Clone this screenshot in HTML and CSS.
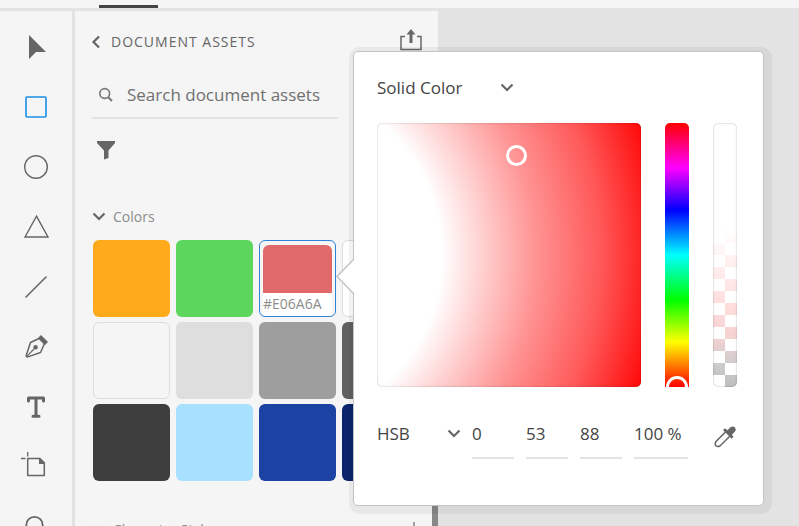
FILE: index.html
```html
<!DOCTYPE html>
<html lang="en">
<head>
    <meta charset="UTF-8">
    <meta name="viewport" content="width=device-width, initial-scale=1.0">
    <title>Document Assets</title>
    <link rel="stylesheet" href="styles.css">
</head>
<body>

    <!-- Top tabs -->
    <header class="topbar">
        <div class="tab-line"></div>
    </header>

    <div class="workspace">
        <!-- Tools -->
        <nav class="toolbar">
            <button class="tool" aria-label="Select">
                <svg width="28" height="28" viewBox="0 0 28 28"><path d="M7 2V26L14 19H24Z" fill="#666"/></svg>
            </button>
            <button class="tool active" aria-label="Rectangle">
                <svg width="28" height="28" viewBox="0 0 28 28"><rect x="4" y="4" width="20" height="20" rx="1" fill="none" stroke="#1a90e6" stroke-width="1.6"/></svg>
            </button>
            <button class="tool" aria-label="Ellipse">
                <svg width="28" height="28" viewBox="0 0 28 28"><circle cx="14" cy="14" r="11.3" fill="none" stroke="#666" stroke-width="1.4"/></svg>
            </button>
            <button class="tool" aria-label="Polygon">
                <svg width="28" height="28" viewBox="0 0 28 28"><path d="M14.5 3.2L26 24H3Z" fill="none" stroke="#666" stroke-width="1.4"/></svg>
            </button>
            <button class="tool" aria-label="Line">
                <svg width="28" height="28" viewBox="0 0 28 28"><path d="M4 24L24 4" stroke="#666" stroke-width="1.6" stroke-linecap="round"/></svg>
            </button>
            <button class="tool" aria-label="Pen">
                <svg width="28" height="28" viewBox="0 0 28 28">
                    <path d="M17.500 5.200L8.500 9.500L4.200 22.500Q4.200 24 5.800 23.900L18.500 19.500L22.500 10.500" fill="none" stroke="#666" stroke-width="1.500" stroke-linejoin="round"/>
                    <path d="M4.800 23.300L13.500 14.500" stroke="#666" stroke-width="1.200"/>
                    <circle cx="13.600" cy="14.300" r="2.200" fill="#666"/>
                    <path d="M19 2L26 9L22.800 12.200L15.800 5.200Z" fill="#666"/>
                </svg>
            </button>
            <button class="tool" aria-label="Text">
                <svg width="28" height="28" viewBox="0 0 28 28"><path d="M6.500 8V5H21.500V8M14 5V23M11 23.200H17" fill="none" stroke="#666" stroke-width="3" stroke-linecap="round" stroke-linejoin="round"/></svg>
            </button>
            <button class="tool" aria-label="Artboard">
                <svg width="28" height="28" viewBox="0 0 28 28">
                    <path d="M5.700 5.500H18L22.300 9.700V22.500H5.700Z" fill="none" stroke="#666" stroke-width="1.500" stroke-linejoin="round"/>
                    <path d="M17 5V11H23Z" fill="#666"/>
                    <path d="M5.700 -1V3.500M-1 5.500H3.500" stroke="#666" stroke-width="1.300"/>
                </svg>
            </button>
            <button class="tool" aria-label="Zoom">
                <svg width="28" height="28" viewBox="0 0 28 28"><circle cx="12.500" cy="12" r="8.200" fill="none" stroke="#666" stroke-width="1.800"/><path d="M18 18L25 25" stroke="#666" stroke-width="2.500"/></svg>
            </button>
        </nav>

        <!-- Assets panel -->
        <aside class="panel">
            <div class="panel-header">
                <button class="back" aria-label="Back">
                    <svg width="8" height="14" viewBox="0 0 8 14"><path d="M7 1.500L1.500 7L7 12.500" fill="none" stroke="#666" stroke-width="2.200"/></svg>
                </button>
                <h1>DOCUMENT ASSETS</h1>
                <button class="share" aria-label="Share">
                    <svg width="24" height="22" viewBox="0 0 24 22">
                        <path d="M6 7.500H2V20.500H22V7.500H18" fill="none" stroke="#666" stroke-width="1.500"/>
                        <path d="M12 14V3" stroke="#666" stroke-width="3"/>
                        <path d="M12 0L16.500 5.500H7.500Z" fill="#666"/>
                    </svg>
                </button>
            </div>

            <label class="search">
                <svg width="16" height="16" viewBox="0 0 16 16"><circle cx="6.700" cy="7.500" r="4.900" fill="none" stroke="#777" stroke-width="1.600"/><path d="M10 11L14 15" stroke="#777" stroke-width="2"/></svg>
                <input type="text" placeholder="Search document assets" aria-label="Search document assets">
            </label>

            <button class="filter" aria-label="Filter">
                <svg width="20" height="20" viewBox="0 0 20 20"><path d="M1 1H19V3L12.500 10.500V18L8 19.500V10.500L1 3Z" fill="#666"/></svg>
            </button>

            <section>
                <h2 class="section-title">
                    <svg width="14" height="9" viewBox="0 0 14 9"><path d="M1.500 1.500L7 7L12.500 1.500" fill="none" stroke="#666" stroke-width="2.200"/></svg>
                    Colors
                </h2>
                <div class="swatches">
                    <button class="swatch orange" aria-label="Orange"></button>
                    <button class="swatch green" aria-label="Green"></button>
                    <button class="swatch selected"><span class="fill"></span><span class="hex">#E06A6A</span></button>
                    <button class="swatch white" aria-label="White"></button>
                    <button class="swatch light" aria-label="Off white"></button>
                    <button class="swatch silver" aria-label="Light gray"></button>
                    <button class="swatch gray" aria-label="Gray"></button>
                    <button class="swatch dim" aria-label="Dim gray"></button>
                    <button class="swatch dark" aria-label="Dark gray"></button>
                    <button class="swatch sky" aria-label="Sky blue"></button>
                    <button class="swatch blue" aria-label="Blue"></button>
                    <button class="swatch navy" aria-label="Navy"></button>
                </div>
            </section>

            <section class="styles-section">
                <h2 class="section-title">
                    <svg width="14" height="9" viewBox="0 0 14 9"><path d="M1.500 1.500L7 7L12.500 1.500" fill="none" stroke="#666" stroke-width="2.200"/></svg>
                    Character Styles
                </h2>
                <button class="add" aria-label="Add character style">
                    <svg width="14" height="14" viewBox="0 0 14 14"><path d="M7 0V14M0 7H14" stroke="#999" stroke-width="1.800"/></svg>
                </button>
            </section>
            <div class="scroll-thumb"></div>
        </aside>

        <main class="canvas"></main>
    </div>

    <!-- Color picker -->
    <div class="picker">
        <svg class="picker-arrow" width="18" height="36" viewBox="0 0 18 36"><path d="M18 0L1 17.500L18 35" fill="#fff" stroke="#c4c4c4" stroke-width="1.500"/></svg>

        <div class="dropdown type">
            <select aria-label="Fill type">
                <option>Solid Color</option>
            </select>
            <svg width="14" height="9" viewBox="0 0 14 9"><path d="M1.500 1.500L7 7L12.500 1.500" fill="none" stroke="#666" stroke-width="2.200"/></svg>
        </div>

        <div class="picker-body">
            <div class="shade">
                <button class="marker" aria-label="Saturation and brightness"></button>
            </div>
            <div class="slider hue">
                <input type="range" min="0" max="360" value="0" aria-label="Hue">
            </div>
            <div class="slider alpha">
                <input type="range" min="0" max="100" value="100" aria-label="Opacity">
            </div>
        </div>

        <div class="values">
            <div class="dropdown mode">
                <select aria-label="Color mode">
                    <option>HSB</option>
                </select>
                <svg width="14" height="9" viewBox="0 0 14 9"><path d="M1.500 1.500L7 7L12.500 1.500" fill="none" stroke="#666" stroke-width="2.200"/></svg>
            </div>
            <input type="text" value="0" aria-label="Hue value">
            <input type="text" value="53" aria-label="Saturation value">
            <input type="text" value="88" aria-label="Brightness value">
            <input type="text" class="wide" value="100 %" aria-label="Opacity value">
            <button class="eyedropper" aria-label="Pick color">
                <svg width="22" height="22" viewBox="0 0 22 22">
                    <path d="M11.500 6L2 15.500Q.5 18 1.800 19.700Q3.500 21.300 6 20L15.500 10.500" fill="none" stroke="#666" stroke-width="1.500"/>
                    <path d="M9 4L11 2.200L13.300 4.200L16.500 1.200Q19 -.4 21 1.500Q22.500 3.500 20.800 5.800L17.800 8.800L19.500 10.800L17.600 12.700Z" fill="#666"/>
                </svg>
            </button>
        </div>
    </div>

</body>
</html>
```
FILE: styles.css
```css
* {
    box-sizing: border-box;
    margin: 0;
    padding: 0;
    font-family: 'Open Sans', 'Noto Sans', sans-serif;
}

body {
    height: 100vh;
    display: flex;
    flex-direction: column;
    overflow: hidden;
    background: #e3e3e3;
    color: #444;
}

button {
    border: none;
    background: none;
    cursor: pointer;
}

svg {
    display: block;
    overflow: visible;
}

/* Top bar */
.topbar {
    height: 11px;
    flex-shrink: 0;
    padding: 5px 0 0 99px;
    background: #f5f5f5;
    border-bottom: 3px solid #e3e3e3;
}

.tab-line {
    width: 59px;
    height: 3px;
    background: #444;
}

.workspace {
    flex: 1;
    min-height: 0;
    display: flex;
}

/* Tools */
.toolbar {
    width: 75px;
    flex-shrink: 0;
    display: flex;
    flex-direction: column;
    padding-top: 6px;
    background: #f5f5f5;
    border-right: 3px solid #e3e3e3;
}

.tool {
    height: 60px;
    flex-shrink: 0;
    display: flex;
    justify-content: center;
    align-items: center;
}

/* Assets panel */
.panel {
    position: relative;
    width: 363px;
    flex-shrink: 0;
    padding: 18px 15px 0 17px;
    background: #f5f5f5;
    overflow: hidden;
}

.panel-header {
    height: 26px;
    display: flex;
    align-items: center;
}

.panel-header h1 {
    flex: 1;
    margin-left: 11px;
    font-size: 14px;
    font-weight: 400;
    line-height: 18px;
    letter-spacing: 1px;
    color: #666;
}

.share {
    align-self: flex-start;
}

.search {
    width: 246px;
    height: 48px;
    margin-top: 16px;
    padding: 0 6px;
    display: flex;
    align-items: center;
    gap: 13px;
    border-bottom: 2px solid #e3e3e3;
}

.search input {
    flex: 1;
    min-width: 0;
    border: none;
    outline: none;
    background: none;
    font-size: 17px;
}

.search input::placeholder {
    color: #707070;
}

.filter {
    display: block;
    margin: 21px 0 0 4px;
}

.section-title {
    height: 20px;
    display: flex;
    align-items: center;
    gap: 7px;
    font-size: 14px;
    font-weight: 400;
    color: #8c8c8c;
}

.filter + section {
    margin-top: 46px;
}

.swatches {
    display: grid;
    grid-template-columns: repeat(4, 77px);
    grid-auto-rows: 77px;
    gap: 5px 6px;
    margin: 14px 0 0 1px;
}

.swatch {
    border-radius: 6px;
}

.orange { background: #ffaa1a; }
.green { background: #5cd65c; }
.white { background: #fff; border: 1px solid #dcdcdc; }
.light { background: #f5f5f5; border: 1px solid #dcdcdc; }
.silver { background: #dedede; }
.gray { background: #9e9e9e; }
.dim { background: #616161; }
.dark { background: #3e3e3e; }
.sky { background: #a8e1ff; }
.blue { background: #1c43a3; }
.navy { background: #0a256c; }

.selected {
    display: flex;
    flex-direction: column;
    padding: 4px 3px 0;
    border: 1px solid #2f83d6;
    background: #f5f5f5;
}

.selected .fill {
    height: 48px;
    flex-shrink: 0;
    border-radius: 6px 6px 0 0;
    background: #e06a6a;
}

.selected .hex {
    flex: 1;
    background: #fff;
    border-radius: 0 0 4px 4px;
    font-size: 14px;
    line-height: 22px;
    text-align: left;
    color: #8c8c8c;
}

.styles-section {
    display: flex;
    justify-content: space-between;
    align-items: center;
    margin-top: 38px;
    padding-right: 2px;
}

.scroll-thumb {
    position: absolute;
    right: 0;
    bottom: 0;
    width: 6px;
    height: 60px;
    background: #888;
}

.canvas {
    flex: 1;
}

/* Color picker */
.picker {
    position: absolute;
    top: 51px;
    left: 353px;
    padding: 22px 26px 45px 23px;
    background: #fff;
    border: 1px solid #c4c4c4;
    border-radius: 5px;
    box-shadow: 2px 2px 0 6px rgba(0, 0, 0, 0.05);
}

.picker-arrow {
    position: absolute;
    top: 207px;
    left: -18px;
}

.dropdown {
    position: relative;
    display: flex;
    align-items: center;
}

.dropdown select {
    width: 100%;
    height: 26px;
    appearance: none;
    border: none;
    outline: none;
    background: none;
    font-size: 17px;
    color: #444;
}

.dropdown svg {
    position: absolute;
    right: 0;
    pointer-events: none;
}

.type {
    width: 137px;
}

.mode {
    width: 84px;
}

.picker-body {
    display: flex;
    gap: 24px;
    margin-top: 23px;
}

.shade {
    position: relative;
    width: 264px;
    height: 264px;
    border-radius: 5px;
    background: radial-gradient(circle at -111px 132px, #fff 175px, #ff9494 269px, #ff5858 335px, #f00 404px);
    box-shadow: inset 0 0 2px rgba(0, 0, 0, 0.3);
}

.marker {
    position: absolute;
    top: 22px;
    left: 129px;
    width: 21px;
    height: 21px;
    border: 3px solid #fff;
    border-radius: 50%;
}

.slider {
    width: 24px;
    height: 264px;
    border-radius: 5px;
    overflow: hidden;
}

.slider input {
    display: block;
    width: 24px;
    height: 286px;
    margin-top: -11px;
    appearance: none;
    background: none;
    writing-mode: vertical-lr;
    direction: rtl;
}

.slider input::-webkit-slider-thumb {
    appearance: none;
    width: 22px;
    height: 22px;
    border: 3px solid #fff;
    border-radius: 50%;
}

.hue {
    border-radius: 5px 5px 0 0;
    background: linear-gradient(#f00, #f0f 17%, #00f 33%, #0ff 50%, #0f0 67%, #ff0 83%, #f00);
}

.alpha {
    background:
        repeating-conic-gradient(#fff 0 25%, transparent 0 50%) 0 0 / 24px 24px,
        linear-gradient(#fff 40%, #ffdede 68%, #f6d2d2 81%, #cbcbcb 92%, #bebebe);
    box-shadow: inset 0 0 2px rgba(0, 0, 0, 0.35);
}

.alpha input::-webkit-slider-thumb {
    border-color: transparent;
}

.values {
    display: flex;
    align-items: center;
    margin-top: 33px;
}

.values input {
    width: 42px;
    height: 38px;
    margin-left: 12px;
    padding-bottom: 12px;
    border: none;
    border-bottom: 2px solid #e3e3e3;
    outline: none;
    font-size: 17px;
    color: #444;
}

.values .mode {
    margin-bottom: 14px;
}

.values .mode + input {
    margin-left: 11px;
}

.values .wide {
    width: 54px;
}

.eyedropper {
    margin: 0 0 6px 26px;
}
```
